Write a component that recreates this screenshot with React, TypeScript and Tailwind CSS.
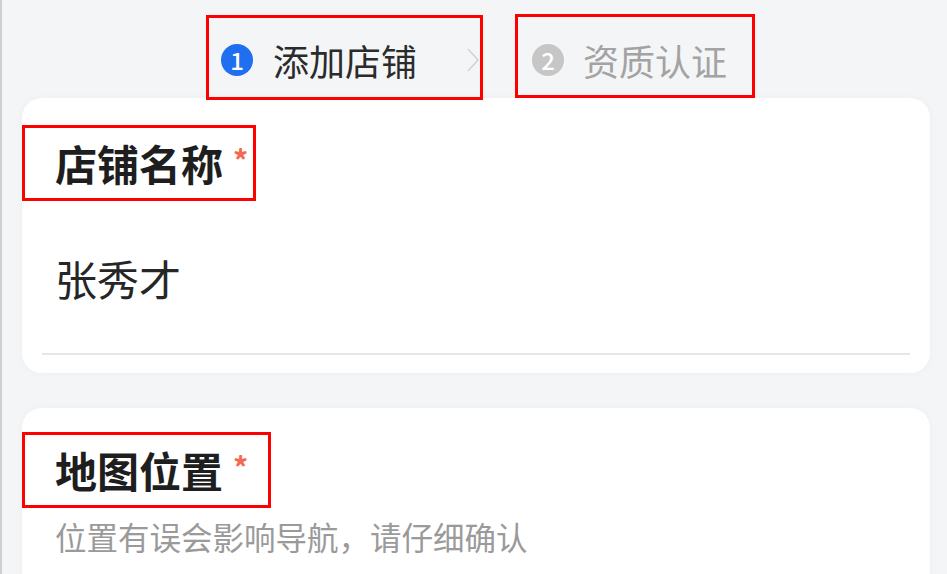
const font = "font-['Noto_Sans_CJK_SC','Noto_Sans',sans-serif]";

function StepDot({ n, active }: { n: number; active?: boolean }) {
  return (
    <span
      className={`flex h-[32px] w-[32px] shrink-0 items-center justify-center rounded-full text-[24px] font-medium leading-none text-white ${
        active ? "bg-[#1f6ff0]" : "bg-[#c6c6c6]"
      }`}
    >
      {n}
    </span>
  );
}

function Label({ text, width }: { text: string; width: string }) {
  return (
    <div className={`relative flex h-[76px] items-center border-[3px] border-[#ff0000] pl-[30px] ${width}`}>
      <span className="whitespace-nowrap text-[42px] font-bold leading-none text-[#1e1e1e]">{text}</span>
      <span className="ml-[10px] -mt-[8px] text-[30px] font-bold leading-none text-[#f26a4f]">*</span>
    </div>
  );
}

export default function App() {
  return (
    <div className={`h-[574px] w-[947px] overflow-hidden border-l-2 border-[#cfcfcf] bg-[#f4f5f7] ${font}`}>
      {/* steps */}
      <div className="flex h-[98px] items-start">
        <div className="relative ml-[204px] mt-[15px] flex h-[85px] w-[277px] shrink-0 items-center border-[3px] border-[#ff0000] pl-[12px] pt-[5px]">
          <StepDot n={1} active />
          <span className="ml-[20px] whitespace-nowrap text-[36px] leading-none text-[#2b2b2b]">添加店铺</span>
          <svg className="ml-[50px] shrink-0" width="12" height="24" viewBox="0 0 12 24" fill="none">
            <polyline points="1,1 11,12 1,23" stroke="#cfcfcf" strokeWidth="1.4" />
          </svg>
        </div>
        <div className="relative ml-[32px] mt-[14px] flex h-[84px] w-[240px] shrink-0 items-center border-[3px] border-[#ff0000] pl-[14px] pt-[7px]">
          <StepDot n={2} />
          <span className="ml-[19px] whitespace-nowrap text-[36px] leading-none text-[#a3a3a3]">资质认证</span>
        </div>
      </div>

      {/* shop name card */}
      <div className="ml-[20px] h-[275px] w-[908px] rounded-[20px] bg-white pt-[27px] shadow-[0_0_10px_rgba(0,0,0,0.03)]">
        <Label text="店铺名称" width="w-[234px]" />
        <div className="mt-[56px] pl-[33px] text-[42px] leading-none text-[#262626]">张秀才</div>
        <div className="mx-[20px] mt-[54px] h-[2px] bg-[#e6e6e6]" />
      </div>

      {/* map location card */}
      <div className="ml-[20px] mt-[35px] h-[200px] w-[908px] rounded-[20px] bg-white pt-[24px] shadow-[0_0_10px_rgba(0,0,0,0.03)]">
        <Label text="地图位置" width="w-[249px]" />
        <div className="mt-[13px] whitespace-nowrap pl-[33px] text-[31.5px] leading-none text-[#9a9a9a]">位置有误会影响导航，请仔细确认</div>
      </div>
    </div>
  );
}
